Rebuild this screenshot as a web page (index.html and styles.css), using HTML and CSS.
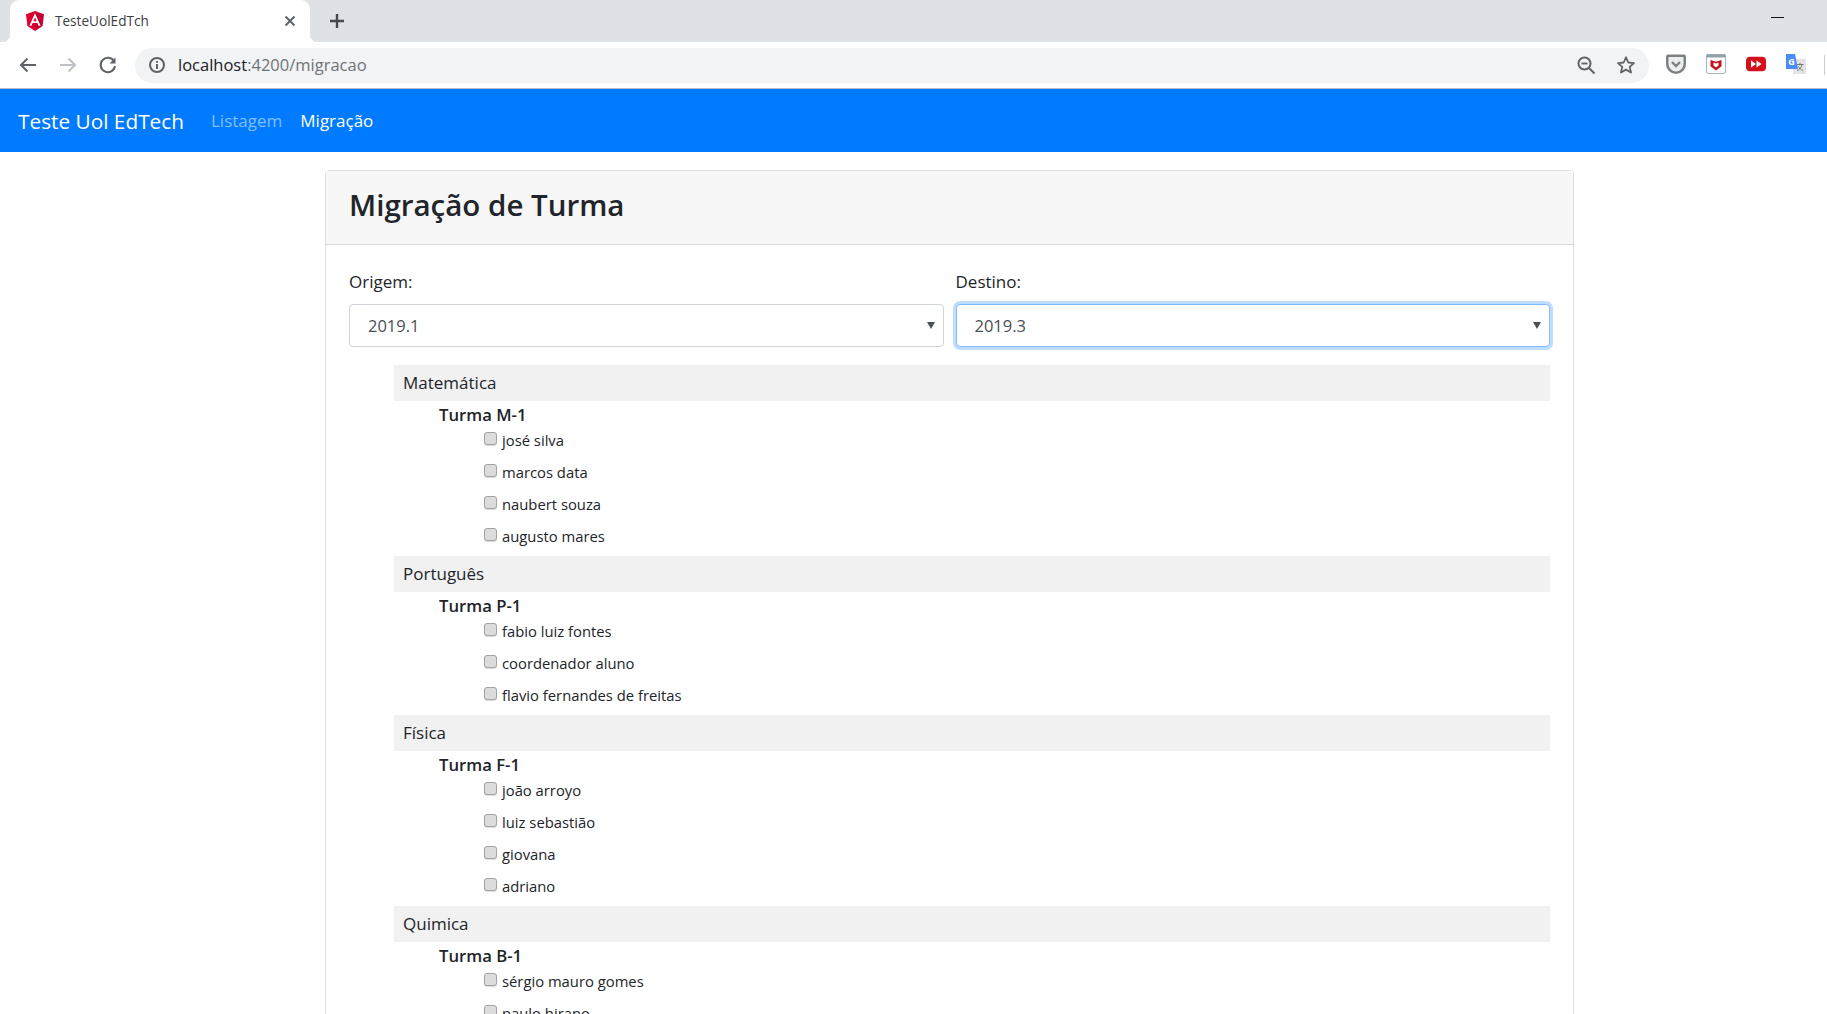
FILE: index.html
```html
<!doctype html>
<html lang="pt-BR">
  <head>
    <title>TesteUolEdTch</title>
    <meta charset="UTF-8">
    <link rel="stylesheet" href="styles.css">
  </head>
  <body>
<header class="chrome">
  <div class="tabstrip">
    <div class="tab">
      <svg class="tab-icon" viewBox="0 0 18 20"><path fill="#dd0031" d="M9 0 0 3.2l1.4 11.9L9 20z"/><path fill="#c3002f" d="M9 0l9 3.2-1.4 11.9L9 20z"/><path fill="#fff" d="M9 2.2 3.4 14.8h2.1l1.1-2.8h4.8l1.1 2.8h2.1zm1.6 8.1H7.4L9 6.4z"/></svg>
      <span class="tab-title">TesteUolEdTch</span>
      <svg class="tab-close" viewBox="0 0 12 12"><path d="M1.5 1.5l9 9m0-9l-9 9" stroke="#5f6368" stroke-width="2" fill="none"/></svg>
    </div>
    <svg class="new-tab" viewBox="0 0 14 14"><path d="M7 0v14M0 7h14" stroke="#45494f" stroke-width="2.400" fill="none"/></svg>
    <span class="minimize"></span>
  </div>
  <div class="toolbar">
    <div class="tool"><svg viewBox="0 0 20 20"><path d="M18 10H3m6.500-6.500L3 10l6.500 6.500" stroke="#5f6368" stroke-width="2" fill="none"/></svg></div>
    <div class="tool"><svg viewBox="0 0 20 20"><path d="M2 10h15m-6.500-6.500L17 10l-6.500 6.500" stroke="#bdc1c6" stroke-width="2" fill="none"/></svg></div>
    <div class="tool"><svg viewBox="0 0 20 20"><path d="M16.200 6.500A7.200 7.200 0 1 0 17 11" stroke="#5f6368" stroke-width="2" fill="none"/><path d="M17.500 2.500v6h-6z" fill="#5f6368"/></svg></div>
    <div class="omnibox">
      <svg class="omni-icon" viewBox="0 0 20 20"><circle cx="10" cy="10" r="7" stroke="#5f6368" stroke-width="2" fill="none"/><path d="M10 9v5M10 6v1.800" stroke="#5f6368" stroke-width="2"/></svg>
      <span class="url">localhost<span class="url-path">:4200/migracao</span></span>
      <svg class="omni-icon" viewBox="0 0 20 20"><circle cx="8.500" cy="8.500" r="6" stroke="#5f6368" stroke-width="2" fill="none"/><path d="M13 13l5.500 5.500" stroke="#5f6368" stroke-width="2"/><path d="M5.500 8.500h6" stroke="#5f6368" stroke-width="1.800"/></svg>
      <svg class="omni-icon" viewBox="0 0 20 20"><path d="M10 2.300l2.300 5.200 5.700.6-4.300 3.800 1.300 5.600-5-2.900-5 2.900 1.300-5.600L2 8.100l5.700-.6z" stroke="#5f6368" stroke-width="1.800" fill="none" stroke-linejoin="round"/></svg>
    </div>
    <div class="extensions">
      <div class="tool"><svg viewBox="0 0 20 20"><path d="M0 2.500q0-2 2-2h16q2 0 2 2V10a10 10 0 0 1-20 0z" fill="#7d8184"/><path d="M3 3h14q.5 0 .5.500V10a7.500 7.500 0 0 1-15 0V3.500q0-.5.500-.5z" fill="#eceded"/><path d="M6 8l4 4 4-4" stroke="#7d8184" stroke-width="2.400" fill="none"/></svg></div>
      <div class="tool"><svg viewBox="0 0 20 20"><rect x=".5" y=".5" width="19" height="19" rx="1.500" fill="#fff" stroke="#a9b4b6"/><rect x=".5" y=".5" width="19" height="3" fill="#8fa1a8"/><path d="M4.500 6 10 7.800 15.500 6v6.200L10 16.500l-5.500-4.300z" fill="#c4111c"/><path d="M7.500 8.600v3l2.500 1.800 2.500-1.800v-3l-2.500.8z" fill="#fff"/></svg></div>
      <div class="tool"><svg viewBox="0 0 20 16"><rect width="20" height="14.500" y=".7" rx="4" fill="#d3111a"/><path d="M5 4.500l5 3.500-5 3.500zm5.500 0l5 3.500-5 3.500z" fill="#fff"/></svg></div>
      <div class="tool"><svg class="translate" viewBox="0 0 22 22"><rect x="8" y="5" width="13" height="15" fill="#e3e3e3"/><path d="M11.500 10.500h7M15 9v1.500m2 0c-.5 3-2.500 5-5 6m1.500-4c1 2 2.500 3.200 4.500 4" stroke="#777" fill="none"/><path d="M1 0h9l3 15H6l1.500 5L6 15H1z" fill="#4a8bf5"/><text class="translate-g" x="3.200" y="10.500">G</text></svg></div>
    </div>
    <span class="tool-sep"></span>
  </div>
</header>

<nav class="navbar">
  <a class="brand">Teste Uol EdTech</a>
  <a class="nav-link muted">Listagem</a>
  <a class="nav-link">Migração</a>
</nav>

<main class="card">
  <div class="card-header">
    <h2>Migração de Turma</h2>
  </div>
  <div class="card-body">
    <form class="form-row">
      <div class="field">
        <label for="origem">Origem:</label>
        <div class="select-wrap">
          <select id="origem"><option>2019.1</option></select>
        </div>
      </div>
      <div class="field">
        <label for="destino">Destino:</label>
        <div class="select-wrap">
          <select id="destino" class="focused"><option>2019.3</option></select>
        </div>
      </div>
    </form>

    <ul class="disciplinas">
      <li>
        <div class="disciplina">Matemática</div>
        <div class="turma">Turma M-1</div>
        <ul class="alunos">
          <li><input type="checkbox"><span>josé silva</span></li>
          <li><input type="checkbox"><span>marcos data</span></li>
          <li><input type="checkbox"><span>naubert souza</span></li>
          <li><input type="checkbox"><span>augusto mares</span></li>
        </ul>
      </li>
      <li>
        <div class="disciplina">Português</div>
        <div class="turma">Turma P-1</div>
        <ul class="alunos">
          <li><input type="checkbox"><span>fabio luiz fontes</span></li>
          <li><input type="checkbox"><span>coordenador aluno</span></li>
          <li><input type="checkbox"><span>flavio fernandes de freitas</span></li>
        </ul>
      </li>
      <li>
        <div class="disciplina">Física</div>
        <div class="turma">Turma F-1</div>
        <ul class="alunos">
          <li><input type="checkbox"><span>joão arroyo</span></li>
          <li><input type="checkbox"><span>luiz sebastião</span></li>
          <li><input type="checkbox"><span>giovana</span></li>
          <li><input type="checkbox"><span>adriano</span></li>
        </ul>
      </li>
      <li>
        <div class="disciplina">Quimica</div>
        <div class="turma">Turma B-1</div>
        <ul class="alunos">
          <li><input type="checkbox"><span>sérgio mauro gomes</span></li>
          <li><input type="checkbox"><span>paulo hirano</span></li>
        </ul>
      </li>
    </ul>
  </div>
</main>
  </body>
</html>
```

FILE: styles.css
```css
html, body {
  margin: 0;
  height: 1014px;
  overflow: hidden;
  background: #fff;
  color: #212529;
  font-family: "Open Sans", "Noto Sans", sans-serif;
  font-size: 17px;
}
ul {
  list-style: none;
  margin: 0;
  padding: 0;
}

/* browser window */
.tabstrip {
  height: 42px;
  background: #dee1e6;
  display: flex;
  align-items: center;
}
.tab {
  position: relative;
  width: 300px;
  height: 42px;
  margin-left: 10px;
  box-sizing: border-box;
  padding: 0 14px 0 16px;
  background: #fff;
  border-radius: 9px 9px 0 0;
  display: flex;
  align-items: center;
}
.tab::before, .tab::after {
  content: "";
  position: absolute;
  bottom: 0;
  width: 8px;
  height: 8px;
}
.tab::before {
  left: -8px;
  background: radial-gradient(circle at 0 0, transparent 8px, #fff 8.500px);
}
.tab::after {
  right: -8px;
  background: radial-gradient(circle at 100% 0, transparent 8px, #fff 8.500px);
}
.tab-icon {
  width: 18px;
  height: 20px;
}
.tab-title {
  flex: 1;
  margin: 0 0 2px 11px;
  font-size: 13.600px;
  color: #3c4043;
}
.tab-close {
  width: 12px;
  height: 12px;
}
.new-tab {
  width: 14px;
  height: 14px;
  margin-left: 20px;
}
.minimize {
  width: 13px;
  height: 1px;
  margin-left: auto;
  margin-right: 43px;
  margin-bottom: 8px;
  background: #111;
}
.toolbar {
  height: 46px;
  border-bottom: 1px solid #b9bbbd;
  padding-left: 8px;
  display: flex;
  align-items: center;
}
.tool {
  width: 40px;
  display: flex;
  justify-content: center;
}
.tool svg {
  width: 20px;
  height: 20px;
}
.tool svg.translate {
  width: 22px;
  height: 22px;
}
.omnibox {
  width: 1514px;
  height: 35px;
  margin-left: 7px;
  box-sizing: border-box;
  padding: 0 13px 0 12px;
  border-radius: 18px;
  background: #f1f3f4;
  display: flex;
  align-items: center;
  gap: 20px;
}
.omni-icon {
  width: 20px;
  height: 20px;
  flex: none;
}
.url {
  flex: 1;
  margin: 0 0 2px -9px;
  font-size: 16.500px;
  color: #202124;
}
.url-path {
  color: #6f7377;
}
.extensions {
  margin-left: 7px;
  display: flex;
}
.translate-g {
  font-size: 9px;
  font-weight: 700;
  fill: #fff;
}
.tool-sep {
  width: 1px;
  height: 20px;
  margin-left: 8px;
  background: #ccc;
}

/* app */
.navbar {
  height: 63px;
  background: #007bff;
  padding-left: 18px;
  display: flex;
  align-items: center;
  color: #fff;
}
.brand {
  font-size: 20.800px;
  margin-right: 27px;
}
.nav-link {
  font-size: 17px;
  margin-right: 18px;
}
.nav-link.muted {
  color: rgba(255, 255, 255, .5);
}

.card {
  width: 1249px;
  box-sizing: border-box;
  margin: 18px 0 0 325px;
  border: 1px solid rgba(0, 0, 0, .125);
  border-radius: 4px;
}
.card-header {
  height: 74px;
  box-sizing: border-box;
  padding: 0 0 5px 23px;
  background: #f7f7f7;
  border-bottom: 1px solid rgba(0, 0, 0, .125);
  display: flex;
  align-items: center;
}
.card-header h2 {
  margin: 0;
  font-size: 29.500px;
  font-weight: 600;
  line-height: 1.2;
}
.card-body {
  padding: 23px 23px 0;
}
.form-row {
  display: grid;
  grid-template-columns: 1fr 1fr;
  gap: 12px;
}
.field label {
  display: block;
  height: 27px;
  line-height: 27px;
  margin-bottom: 9px;
}
.select-wrap {
  position: relative;
}
.select-wrap::after {
  content: "";
  position: absolute;
  right: 9px;
  top: 18px;
  border: 4px solid transparent;
  border-top: 7px solid #495057;
  border-bottom: 0;
}
select {
  width: 100%;
  height: 43px;
  display: block;
  padding: 0 0 0 18px;
  appearance: none;
  border: 1px solid #ced4da;
  border-radius: 4px;
  background: #fff;
  color: #495057;
  font: inherit;
  font-size: 16.500px;
}
select.focused {
  border-color: #80bdff;
  box-shadow: 0 0 0 3px rgba(0, 123, 255, .25);
}

.disciplinas {
  margin: 18px 0 0 45px;
}
.disciplina {
  height: 36px;
  line-height: 36px;
  padding-left: 9px;
  background: #f1f1f1;
}
.turma {
  height: 27px;
  line-height: 27px;
  padding-left: 45px;
  font-size: 16.700px;
  font-weight: 600;
}
.alunos {
  padding-left: 90px;
}
.alunos li {
  height: 32px;
  display: flex;
  align-items: flex-start;
  font-size: 14.800px;
  line-height: 24px;
}
.alunos input {
  width: 13px;
  height: 13px;
  flex: none;
  margin: 4px 5px 0 0;
  appearance: none;
  border: 1px solid #a3a3a3;
  border-radius: 3px;
  background: #dcdcdc;
  box-shadow: 0 1px 1px rgba(0, 0, 0, .15);
}
```
